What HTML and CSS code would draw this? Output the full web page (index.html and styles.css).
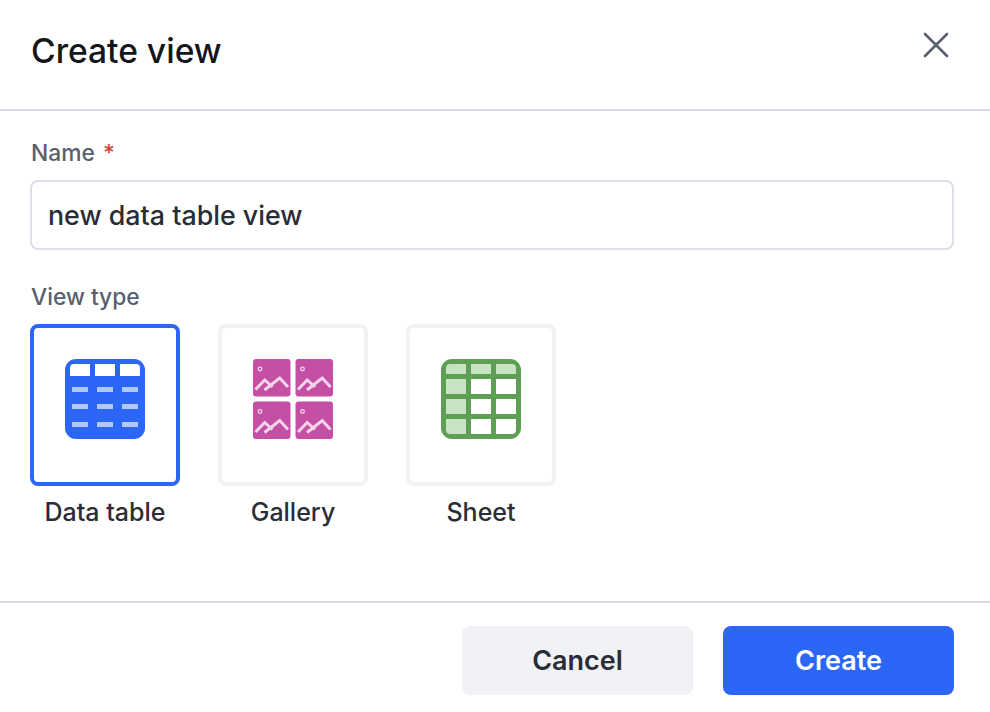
FILE: index.html
```html
<!DOCTYPE html>
<html lang="en">
<head>
<meta charset="utf-8">
<title>Create view</title>
<link rel="stylesheet" href="styles.css">
</head>
<body>
<div class="dialog">
  <header class="header">
    <h1 class="title">Create view</h1>
    <button class="close" aria-label="Close">
      <svg width="26" height="26" viewBox="0 0 26 26" fill="none" stroke="#58606f" stroke-width="2.6" stroke-linecap="round"><path d="M2 2 24 24M24 2 2 24"/></svg>
    </button>
  </header>
  <main class="body">
    <div class="label-row name-label">Name <span class="req">*</span></div>
    <div class="input">new data table view</div>
    <div class="label-row type-label">View type</div>
    <div class="types">
      <div class="type">
        <div class="tile selected">
          <svg width="80" height="80" viewBox="0 0 80 80">
            <rect width="80" height="80" rx="11" fill="#2b66f6"/>
            <path d="M5 9a4 4 0 0 1 4-4H25V17H5ZM30 5H50V17H30ZM55 5H71a4 4 0 0 1 4 4V17H55Z" fill="#fff"/>
            <g fill="#b0c8fb">
              <rect x="7" y="28" width="16" height="5"/><rect x="32" y="28" width="16" height="5"/><rect x="57" y="28" width="16" height="5"/>
              <rect x="7" y="45" width="16" height="5"/><rect x="32" y="45" width="16" height="5"/><rect x="57" y="45" width="16" height="5"/>
              <rect x="7" y="63" width="16" height="5"/><rect x="32" y="63" width="16" height="5"/><rect x="57" y="63" width="16" height="5"/>
            </g>
          </svg>
        </div>
        <div class="type-name">Data table</div>
      </div>
      <div class="type">
        <div class="tile">
          <svg width="80" height="80" viewBox="0 0 80 80">
            <defs>
              <g id="pic">
                <rect width="37.5" height="37.5" rx="3" fill="#c44fa5"/>
                <circle cx="7" cy="10" r="1.8" fill="none" stroke="#f3d5ea" stroke-width="1.3"/>
                <path d="M2.5 30.5 11.7 21 19.5 28M11.5 31 26.7 19 35 28" fill="none" stroke="#f3d5ea" stroke-width="3"/>
              </g>
            </defs>
            <use href="#pic"/>
            <use href="#pic" x="42.5"/>
            <use href="#pic" y="42.5"/>
            <use href="#pic" x="42.5" y="42.5"/>
          </svg>
        </div>
        <div class="type-name">Gallery</div>
      </div>
      <div class="type">
        <div class="tile">
          <svg width="80" height="80" viewBox="0 0 80 80">
            <rect width="80" height="80" rx="11" fill="#5f9f55"/>
            <path d="M5 9a4 4 0 0 1 4-4H25V15H5ZM30 5H50V15H30ZM55 5H71a4 4 0 0 1 4 4V15H55ZM5 20H25V35H5ZM5 40H25V55H5ZM5 60H25V75H9a4 4 0 0 1-4-4Z" fill="#c9e2c4"/>
            <path d="M30 20H50V35H30ZM55 20H75V35H55ZM30 40H50V55H30ZM55 40H75V55H55ZM30 60H50V75H30ZM55 60H75V71a4 4 0 0 1-4 4H55Z" fill="#fff"/>
          </svg>
        </div>
        <div class="type-name">Sheet</div>
      </div>
    </div>
  </main>
  <footer class="footer">
    <button class="btn cancel">Cancel</button>
    <button class="btn create">Create</button>
  </footer>
</div>
</body>
</html>
```
FILE: styles.css
```css
* { box-sizing: border-box; }
html, body { margin: 0; height: 100%; background: #fff; }
body { font-family: Inter, "Liberation Sans", sans-serif; color: #2a2d35; overflow: hidden; }
.dialog { width: 990px; height: 712px; display: flex; flex-direction: column; }
.header {
  height: 111px;
  padding: 0 41px 0 31px;
  border-bottom: 2px solid #dcdce8;
  display: flex;
  justify-content: space-between;
  align-items: flex-start;
}
.title { margin: 31px 0 0; font-size: 33.6px; line-height: 40px; font-weight: 500; color: #14161b; }
.close { margin: 32px 0 0; padding: 0; border: 0; background: none; width: 26px; height: 26px; display: flex; align-items: center; justify-content: center; }
.body { flex: 1; padding: 0 36px 0 30px; }
.label-row { font-size: 22.8px; line-height: 28px; font-weight: 500; color: #58606f; margin-left: 1px; }
.name-label { margin-top: 28px; }
.req { color: #d2453c; margin-left: 2px; }
.input {
  margin-top: 13px;
  height: 70px;
  border: 2px solid #dcdfea;
  border-radius: 8px;
  padding: 0 16px;
  display: flex;
  align-items: center;
  font-size: 26.8px;
  font-weight: 500;
  color: #2a2d35;
}
.type-label { margin-top: 33px; }
.types { display: flex; gap: 38px; margin-top: 13px; }
.type { width: 150px; display: flex; flex-direction: column; align-items: center; }
.tile {
  width: 150px;
  height: 162px;
  border: 4px solid #f1f2f5;
  border-radius: 8px;
  display: flex;
  justify-content: center;
  padding-top: 31px;
  background: #fff;
}
.tile.selected { border-color: #2b66f6; }
.tile svg { display: block; }
.type-name { margin-top: 11px; font-size: 25px; line-height: 30px; font-weight: 500; color: #2a2d35; }
.footer {
  height: 111px;
  border-top: 2px solid #dcdce8;
  padding: 23px 36px 0 0;
  display: flex;
  justify-content: flex-end;
  align-items: flex-start;
  gap: 30px;
}
.btn {
  width: 231px;
  height: 69px;
  border: 0;
  border-radius: 8px;
  font-family: inherit;
  font-size: 27px;
  font-weight: 600;
}
.cancel { background: #f1f2f6; color: #2a2d35; }
.create { background: #2b66f6; color: #fff; }
```
